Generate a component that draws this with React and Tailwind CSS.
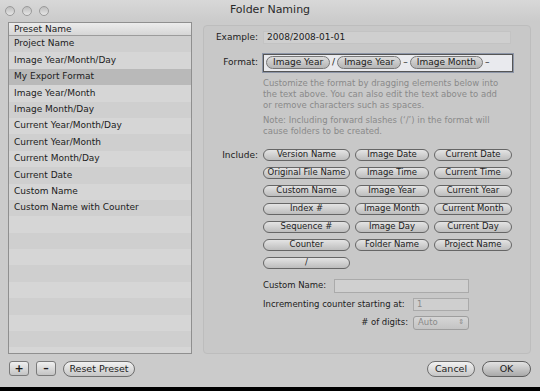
import React from "react";

const presets = [
  "Project Name",
  "Image Year/Month/Day",
  "My Export Format",
  "Image Year/Month",
  "Image Month/Day",
  "Current Year/Month/Day",
  "Current Year/Month",
  "Current Month/Day",
  "Current Date",
  "Custom Name",
  "Custom Name with Counter",
];

const includes = [
  ["Version Name", "Image Date", "Current Date"],
  ["Original File Name", "Image Time", "Current Time"],
  ["Custom Name", "Image Year", "Current Year"],
  ["Index #", "Image Month", "Current Month"],
  ["Sequence #", "Image Day", "Current Day"],
  ["Counter", "Folder Name", "Project Name"],
  ["/"],
];

function Light() {
  return (
    <div className="w-[10px] h-[10px] rounded-full border border-[#9a9a9a] bg-gradient-to-b from-[#bdbdbd] to-[#e6e6e6]" />
  );
}

function Pill({ children, className = "" }) {
  return (
    <div
      className={
        "h-[12px] rounded-full border border-[#666] bg-gradient-to-b from-[#e4e4e4] to-[#bdbdbd] flex items-center justify-center text-[8.5px] leading-none text-[#1c1c1c] whitespace-nowrap " +
        className
      }
    >
      {children}
    </div>
  );
}

function Token({ children, className = "" }) {
  return (
    <span
      className={
        "h-[13px] px-[6px] rounded-full border border-[#777] bg-gradient-to-b from-[#dcdcdc] to-[#b5b5b5] inline-flex items-center text-[9px] leading-none text-[#1c1c1c] " +
        className
      }
    >
      {children}
    </span>
  );
}

export default function App() {
  const rows = Array.from({ length: 21 });

  return (
    <div className="w-[540px] h-[391px] bg-black flex flex-col font-['DejaVu_Sans',sans-serif] text-[#1c1c1c]">
      <div className="h-[387px] bg-[#cbcbcb] flex flex-col">
        {/* Title bar */}
        <div className="h-[21px] grid grid-cols-3 items-center bg-gradient-to-b from-[#d8d8d8] to-[#cbcbcb]">
          <div className="flex gap-[7px] pl-[5px]">
            <Light />
            <Light />
            <Light />
          </div>
          <div className="text-center text-[11px] text-[#2a2a2a] whitespace-nowrap">
            Folder Naming
          </div>
          <div />
        </div>

        {/* Main content */}
        <div className="flex px-[8px] pt-[1px] gap-[11px] h-[333px]">
          {/* Preset list */}
          <div className="w-[184px] h-[332px] border border-[#8f8f8f] bg-[#d3d3d3] overflow-hidden flex flex-col">
            <div className="h-[13px] shrink-0 border-b border-[#9c9c9c] bg-gradient-to-b from-[#ececec] to-[#d6d6d6] pl-[5px] text-[9px] leading-[12px]">
              Preset Name
            </div>
            {rows.map((_, i) => (
              <div
                key={i}
                className={
                  "h-[16.4px] shrink-0 pl-[5px] flex items-center text-[9px] whitespace-nowrap " +
                  (i === 2
                    ? "bg-[#b9b9b9]"
                    : i % 2 === 0
                    ? "bg-[#cfcfcf]"
                    : "bg-[#d6d6d6]")
                }
              >
                {presets[i] || ""}
              </div>
            ))}
          </div>

          {/* Right panel */}
          <div className="mt-[3px] w-[328px] h-[329px] rounded-[4px] border border-[#bdbdbd] bg-[#c8c8c8] pt-[5px] text-[9px]">
            {/* Example */}
            <div className="flex items-center">
              <div className="w-[54px] text-right">Example:</div>
              <div className="ml-[5px] w-[248px] h-[13px] bg-[#cfcfcf] border border-[#c3c3c3] flex items-center pl-[3px]">
                2008/2008-01-01
              </div>
            </div>

            {/* Format */}
            <div className="flex items-center mt-[9px]">
              <div className="w-[54px] text-right">Format:</div>
              <div className="ml-[5px] w-[250px] h-[18px] bg-[#e9eaee] border border-[#555] shadow-[0_0_0_1px_#8d96a8] flex items-center pl-[2px] gap-[2px] whitespace-nowrap">
                <Token>Image Year</Token>
                <span>/</span>
                <Token>Image Year</Token>
                <span>–</span>
                <Token>Image Month</Token>
                <span>–</span>
              </div>
            </div>

            {/* Help text */}
            <div className="ml-[59px] mt-[6px] text-[8.5px] leading-[11px] text-[#8a8a8a] whitespace-nowrap">
              <div>Customize the format by dragging elements below into</div>
              <div>the text above. You can also edit the text above to add</div>
              <div>or remove characters such as spaces.</div>
              <div className="mt-[4px]">Note: Including forward slashes (‘/’) in the format will</div>
              <div>cause folders to be created.</div>
            </div>

            {/* Include */}
            <div className="flex mt-[12px]">
              <div className="w-[54px] text-right leading-[12px]">Include:</div>
              <div className="ml-[5px] flex flex-col gap-[6px]">
                {includes.map((r, i) => (
                  <div key={i} className="flex gap-[5px]">
                    {r[0] !== undefined && <Pill className="w-[87px]">{r[0]}</Pill>}
                    {r[1] !== undefined && <Pill className="w-[74px]">{r[1]}</Pill>}
                    {r[2] !== undefined && <Pill className="w-[78px]">{r[2]}</Pill>}
                  </div>
                ))}
              </div>
            </div>

            {/* Custom name / counter */}
            <div className="ml-[59px] mt-[10px] w-[206px] flex flex-col gap-[5px] text-[8.5px]">
              <div className="flex items-center justify-between">
                <span>Custom Name:</span>
                <div className="w-[135px] h-[14px] bg-[#d0d0d0] border border-[#aaa]" />
              </div>
              <div className="flex items-center justify-between">
                <span className="whitespace-nowrap">Incrementing counter starting at:</span>
                <div className="w-[56px] h-[13px] bg-[#cfcfcf] border border-[#aaa] pl-[3px] leading-[11px] text-[#8a8a8a]">
                  1
                </div>
              </div>
              <div className="flex items-center justify-end gap-[5px]">
                <span># of digits:</span>
                <div className="w-[56px] h-[14px] rounded-[3px] bg-gradient-to-b from-[#d6d6d6] to-[#c4c4c4] border border-[#9e9e9e] flex items-center justify-between pl-[4px] pr-[4px] text-[#8a8a8a]">
                  <span>Auto</span>
                  <span className="text-[7px] leading-none">⇕</span>
                </div>
              </div>
            </div>
          </div>
        </div>

        {/* Bottom bar */}
        <div className="flex items-start pt-[7px] pl-[9px] pr-[9px]">
          <div className="w-[20px] h-[15px] rounded-[3px] border border-[#7a7a7a] bg-gradient-to-b from-[#f0f0f0] to-[#c4c4c4] flex items-center justify-center text-[11px] font-bold leading-none">
            +
          </div>
          <div className="ml-[7px] w-[20px] h-[15px] rounded-[3px] border border-[#7a7a7a] bg-gradient-to-b from-[#f0f0f0] to-[#c4c4c4] flex items-center justify-center text-[11px] font-bold leading-none">
            –
          </div>
          <div className="ml-[7px] w-[72px] h-[16px] rounded-full border border-[#6e6e6e] bg-gradient-to-b from-[#f2f2f2] to-[#c6c6c6] flex items-center justify-center text-[9.5px] whitespace-nowrap">
            Reset Preset
          </div>
          <div className="ml-auto w-[48px] h-[16px] rounded-full border border-[#6e6e6e] bg-gradient-to-b from-[#f2f2f2] to-[#c6c6c6] flex items-center justify-center text-[9.5px]">
            Cancel
          </div>
          <div className="ml-[7px] w-[49px] h-[16px] rounded-full border border-[#5e5e5e] bg-gradient-to-b from-[#e2e2e2] to-[#a9a9a9] flex items-center justify-center text-[9.5px]">
            OK
          </div>
        </div>
      </div>
    </div>
  );
}
